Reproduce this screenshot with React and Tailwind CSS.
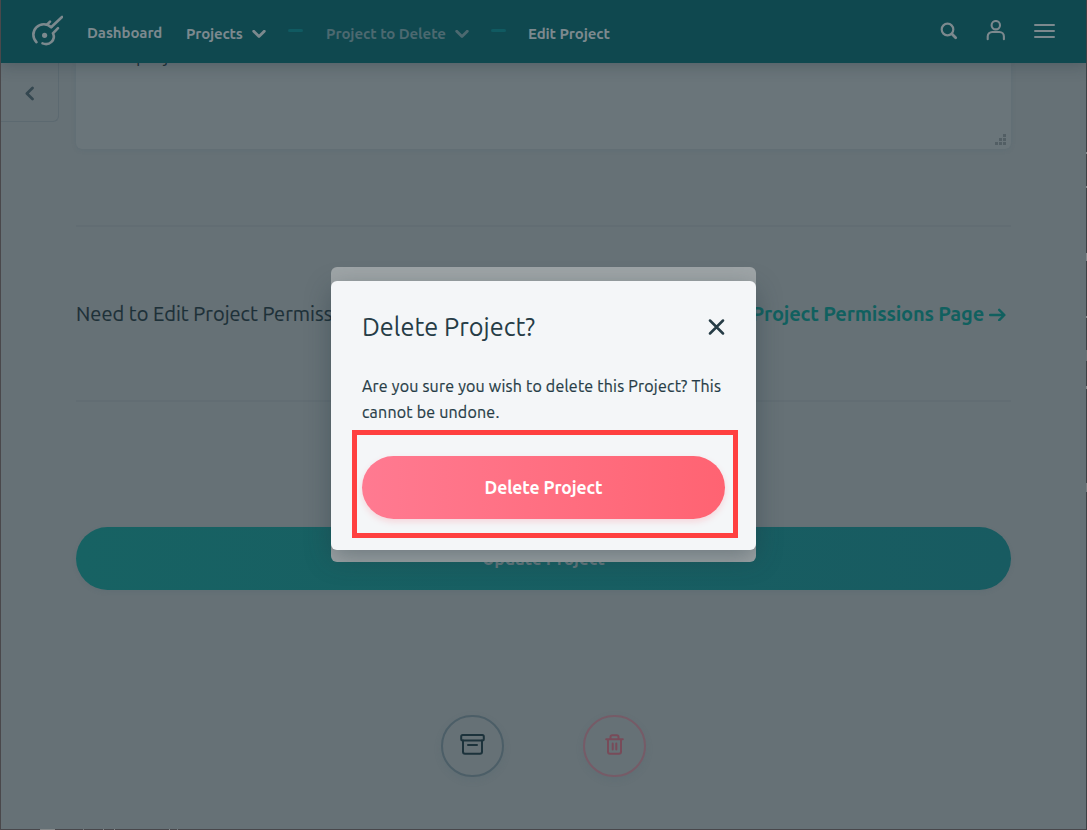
import React from "react";

function Logo() {
  return (
    <svg width="32" height="32" viewBox="0 0 32 32" fill="none" stroke="currentColor" strokeWidth="2.6" strokeLinecap="round">
      <path d="M5.5 27.2A10.5 10.5 0 0 1 20.2 12.2" />
      <path d="M11.5 28.4C18.5 31 25 25 22 18.3L27 13.2" />
      <path d="M16 9.6L19 6.6M20.4 12L31 2" />
      <circle cx="13.6" cy="20.3" r="2.6" fill="currentColor" stroke="none" />
    </svg>
  );
}

function ChevronDown() {
  return (
    <svg width="14" height="9" viewBox="0 0 14 9" fill="none" stroke="currentColor" strokeWidth="2.8" strokeLinecap="round" strokeLinejoin="round">
      <path d="M1.7 1.2L7 6.5l5.3-5.3" />
    </svg>
  );
}

function Header() {
  return (
    <header className="relative z-10 flex h-[63px] shrink-0 items-start bg-[#0f484f] pl-[30px] text-[15px] leading-5 font-semibold whitespace-nowrap text-[#7c898e] shadow-[0_3px_14px_rgba(30,50,58,0.3)]">
      <div className="w-14 pt-[15px]"><Logo /></div>
      <div className="w-[99px] pt-[23px] tracking-[-0.1px]">Dashboard</div>
      <div className="flex w-[102px] pt-6">
        <span className="w-[66px] tracking-[-0.2px]">Projects</span>
        <span className="pt-[6px]"><ChevronDown /></span>
      </div>
      <div className="w-[38px] pt-[29px]"><div className="h-[3px] w-[15px] rounded-sm bg-[#105a61]" /></div>
      <div className="flex w-[165px] pt-6 text-[#4c6970]">
        <span className="w-[129px] tracking-[-0.08px]">Project to Delete</span>
        <span className="pt-[6px]"><ChevronDown /></span>
      </div>
      <div className="w-[37px] pt-[29px]"><div className="h-[3px] w-[15px] rounded-sm bg-[#105a61]" /></div>
      <div className="pt-6 tracking-[-0.1px]">Edit Project</div>
      <div className="ml-auto flex pr-8">
        <svg className="mt-[22px] mr-[28px]" width="18" height="18" viewBox="0 0 18 18" fill="none" stroke="currentColor" strokeWidth="2.2" strokeLinecap="round">
          <circle cx="7.5" cy="7.5" r="5.8" /><path d="M12 12l3.7 3.7" strokeWidth="2.8" />
        </svg>
        <svg className="mt-5 mr-[29px]" width="19" height="21" viewBox="0 0 19 21" fill="none" stroke="currentColor" strokeWidth="2.1" strokeLinecap="round">
          <circle cx="9.8" cy="5.2" r="4.2" /><path d="M1.7 19.2v-2.7a4.5 4.5 0 0 1 4.5-4.5h7.2a4.5 4.5 0 0 1 4.5 4.5v2.7" />
        </svg>
        <svg className="mt-[23px]" width="21" height="16" viewBox="0 0 21 16" stroke="currentColor" strokeWidth="2" strokeLinecap="round">
          <path d="M1 2h19M1 8h19M1 14h19" />
        </svg>
      </div>
    </header>
  );
}

function EditForm() {
  return (
    <div className="flex w-[935px] flex-col">
      <div className="flex h-[86px] flex-col justify-between overflow-hidden rounded-b-[6px] bg-[#6a757a] pl-[22px] text-[18px] text-[#182c34] shadow-[0_1px_4px_rgba(75,98,110,0.25)]">
        <span className="-mt-[17px] leading-5">Test project</span>
        <svg className="mr-[5px] mb-[4px] self-end" width="11" height="11" viewBox="0 0 11 11" fill="#525e64">
          <path d="M8 0h3v3H8zM4 4h3v3H4zM8 4h3v3H8zM0 8h3v3H0zM4 8h3v3H4zM8 8h3v3H8z" />
        </svg>
      </div>
      <div className="mt-[76px] flex h-[177px] items-start justify-between border-y-2 border-[#626d73] pt-[73px] text-[20px] leading-[28px] whitespace-nowrap text-[#1d3038]">
        <span className="tracking-[0.04px] [-webkit-text-stroke:0.15px]">Need to Edit Project Permissions?</span>
        <span className="flex items-center pr-1 font-semibold text-[#11605f]">
          <span className="tracking-[-0.18px]">Project Permissions Page</span>
          <svg className="ml-[5px]" width="18" height="14" viewBox="0 0 18 14" fill="none" stroke="currentColor" strokeWidth="2.4" strokeLinecap="round" strokeLinejoin="round">
            <path d="M1.2 8h14M10.2 2.8L15.4 8l-5.2 5.2" />
          </svg>
        </span>
      </div>
      <button className="mt-[125px] flex h-[63px] shrink-0 items-center justify-center rounded-full bg-linear-to-r from-[#176263] to-[#185b61] pt-[2px] text-[17.5px] font-semibold tracking-[-0.1px] text-[#63777c] shadow-[0_2px_4px_rgba(75,98,110,0.2)]">
        Update Project
      </button>
      <div className="mt-[125px] flex justify-center gap-[79px] pr-px">
        <button className="flex h-[62px] w-[63px] items-center justify-center rounded-full border-2 border-[#4c5e67] text-[#1c323b] shadow-[0_3px_7px_rgba(75,98,110,0.2)]">
          <svg className="-mt-[3px]" width="25" height="21" viewBox="0 0 25 21" fill="none" stroke="currentColor" strokeWidth="2" strokeLinecap="round" strokeLinejoin="round">
            <rect x="1.2" y="1" width="22.6" height="5.4" rx="1.5" /><path d="M3 6.5v11.3a2 2 0 0 0 2 2h15a2 2 0 0 0 2-2V6.5M8 11h9" />
          </svg>
        </button>
        <button className="flex h-[62px] w-[63px] items-center justify-center rounded-full border-2 border-[#765b67] text-[#784b59] shadow-[0_3px_7px_rgba(75,98,110,0.2)]">
          <svg className="-mt-[4px]" width="19" height="21" viewBox="0 0 19 21" fill="none" stroke="currentColor" strokeWidth="2" strokeLinecap="round" strokeLinejoin="round">
            <path d="M1.2 5.2h16.6M5.5 5V3a1.7 1.7 0 0 1 1.7-1.7h4.6A1.7 1.7 0 0 1 13.5 3v2M3 5.3v12.5a2 2 0 0 0 2 2h9a2 2 0 0 0 2-2V5.3M7.7 9.5v6M11.3 9.5v6" />
          </svg>
        </button>
      </div>
    </div>
  );
}

function DeleteDialog() {
  return (
    <div className="absolute top-[267px] left-[331px] z-20 h-[295px] w-[425px] rounded-[6px] bg-[#9fa5a7] pt-[14px]">
      <div role="dialog" className="flex h-[269px] flex-col rounded-[6px] bg-[#f4f6f8] pt-[30px] pr-[31px] pl-[31px] text-[#263c46] shadow-[0_8px_26px_rgba(35,55,66,0.4)]">
        <div className="flex h-8 items-center justify-between">
          <h2 className="text-[25.3px] leading-8">Delete Project?</h2>
          <svg width="17" height="17" viewBox="0 0 17 17" fill="none" stroke="currentColor" strokeWidth="2.5" strokeLinecap="round">
            <path d="M2 1.5l13 13M15 1.5L2 14.5" />
          </svg>
        </div>
        <p className="mt-[30px] text-base leading-[26px] tracking-[0.21px] whitespace-nowrap [-webkit-text-stroke:0.2px]">
          Are you sure you wish to delete this Project? This<br />
          cannot be undone.
        </p>
        <button className="mt-[31px] flex h-[63px] shrink-0 items-center justify-center rounded-full bg-linear-to-r from-[#ff7a91] to-[#ff6372] pt-[2px] text-[17.5px] font-semibold tracking-[-0.12px] text-white shadow-[0_3px_6px_rgba(255,105,125,0.22)]">
          Delete Project
        </button>
      </div>
      <div className="pointer-events-none absolute top-[163px] left-[21px] h-[108px] w-[386px] border-5 border-[#ff4040]" />
    </div>
  );
}

function BottomStrip() {
  return (
    <div className="absolute bottom-0 left-0 z-10 flex h-px w-full bg-[#48474b] pl-[39px]">
      <i className="h-px w-[15px] bg-[#858889]" />
      <i className="ml-[28px] h-px w-px bg-[#777b7d]" />
      <i className="ml-[19px] h-px w-px bg-[#858889]" />
      <i className="ml-[10px] h-px w-px bg-[#858889]" />
      <i className="ml-[54px] h-px w-px bg-[#858889]" />
      <i className="ml-[7px] h-px w-px bg-[#777b7d]" />
    </div>
  );
}

function RightTicks() {
  return (
    <div className="absolute top-0 right-0 z-10 flex h-full w-px flex-col bg-[#3e4044]">
      <i className="mt-[152px] h-[2px] bg-[#85898b]" />
      <i className="mt-[32px] h-[2px] bg-[#85898b]" />
      <i className="mt-[65px] h-[8px] bg-[#85898b]" />
      <i className="mt-[55px] h-[2px] bg-[#85898b]" />
      <i className="mt-[32px] h-[11px] bg-[#6b7073]" />
      <i className="mt-[25px] h-[3px] bg-[#85898b]" />
      <i className="mt-[94px] h-[9px] bg-[#777b7d]" />
    </div>
  );
}

export default function App() {
  return (
    <div className="relative flex h-[830px] w-[1087px] flex-col overflow-hidden border-l border-[#4a484b] bg-[#667176] font-['Ubuntu','Noto_Sans',sans-serif]">
      <Header />
      <main className="flex min-h-0 flex-1 items-start">
        <div className="flex w-[75px] shrink-0">
          <button className="flex h-[59px] w-[58px] items-center justify-center rounded-br-[6px] border-r border-b border-[#5c6970] pt-[3px] text-[#344750]">
            <svg width="10" height="15" viewBox="0 0 10 15" fill="none" stroke="currentColor" strokeWidth="2.7" strokeLinecap="round" strokeLinejoin="round">
              <path d="M7.5 2L1.9 7.5 7.5 13" />
            </svg>
          </button>
        </div>
        <EditForm />
      </main>
      <div className="absolute inset-0 z-20 -ml-px"><DeleteDialog /></div>
      <BottomStrip />
      <RightTicks />
    </div>
  );
}
